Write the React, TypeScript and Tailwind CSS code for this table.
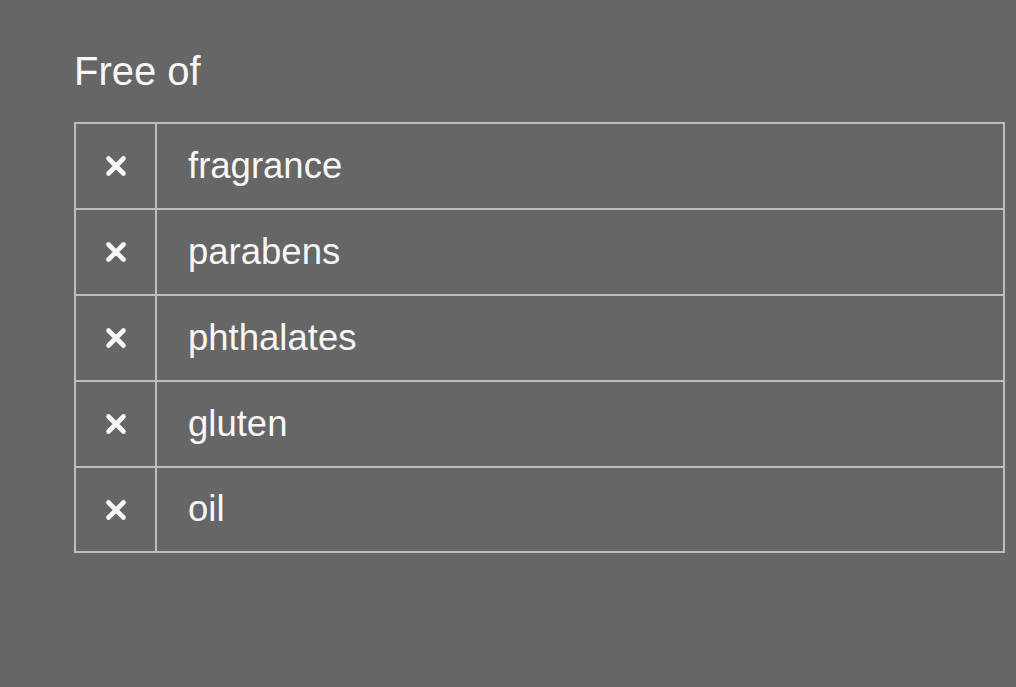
const items = ["fragrance", "parabens", "phthalates", "gluten", "oil"];

const Cross = () => (
  <svg width="24" height="24" viewBox="0 0 24 24" fill="none">
    <path d="M4.5 4.5 L19.5 19.5 M19.5 4.5 L4.5 19.5" stroke="#f7f7f7" strokeWidth="4.6" strokeLinecap="round" />
  </svg>
);

export default function App() {
  return (
    <div
      className="w-[1016px] h-[687px] bg-[#666666] pl-[74px] pr-[11px] pt-[47px] text-[#f7f7f7]"
      style={{ fontFamily: '"Liberation Sans", Arial, sans-serif' }}
    >
      <h1 className="text-[40px] leading-[48px] mb-[27px]">Free of</h1>
      <div className="border-2 border-[#bdbdbd] flex flex-col">
        {items.map((item, i) => {
          const last = i === items.length - 1;
          return (
            <div
              key={item}
              className={"flex items-stretch " + (last ? "h-[83px]" : "h-[86px] border-b-2 border-[#bdbdbd]")}
            >
              <div className="w-[81px] border-r-2 border-[#bdbdbd] flex items-center justify-center">
                <Cross />
              </div>
              <div className="flex items-center pl-[31px] text-[36.5px]">{item}</div>
            </div>
          );
        })}
      </div>
    </div>
  );
}
